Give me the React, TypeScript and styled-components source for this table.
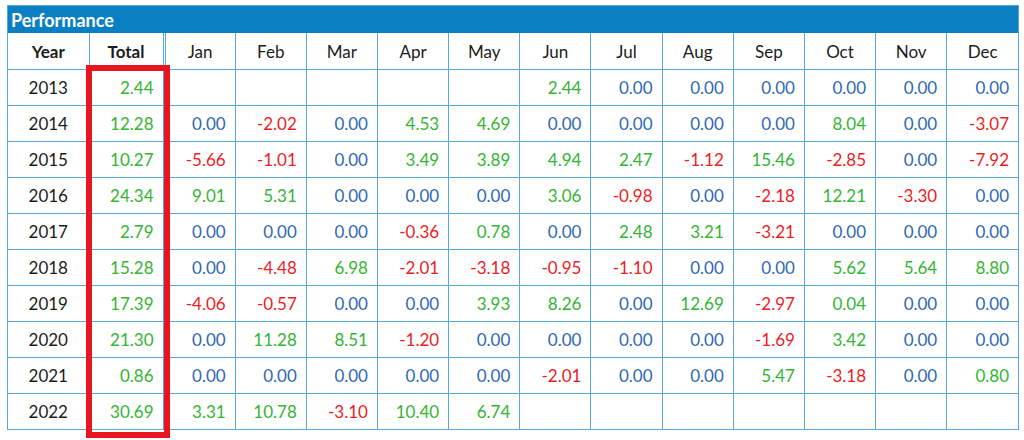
import styled, { createGlobalStyle } from 'styled-components'

const GlobalStyle = createGlobalStyle`
  body {
    margin: 0;
    background: #ffffff;
    font-family: Lato, 'Open Sans', sans-serif;
  }
`

const colors = {
  bar: '#0a80c2',
  border: '#5aa6d6',
  green: '#33b533',
  red: '#ee1c25',
  blue: '#3068b5',
  text: '#1c1c1c',
  box: '#e8141f',
}

const Page = styled.div`
  min-height: 440px;
  box-sizing: border-box;
  padding: 5px 5px 8px 7px;
`

const Panel = styled.div`
  position: relative;
  width: 1012px;
  border: 1px solid ${colors.border};
  box-sizing: border-box;
`

const TitleBar = styled.div`
  height: 27px;
  display: flex;
  align-items: center;
  padding-left: 3px;
  background: ${colors.bar};
  color: #ffffff;
  font-weight: 700;
  font-size: 18px;
`

const Table = styled.table`
  width: 100%;
  border-collapse: collapse;
  table-layout: fixed;
`

const HeadCell = styled.th<{ $bold?: boolean; $split?: boolean }>`
  height: 36px;
  padding: 0;
  border: 1px solid ${colors.border};
  border-top: none;
  ${({ $split }) => ($split ? `border-right: 3px double ${colors.border};` : '')}
  font-size: 17px;
  font-weight: ${({ $bold }) => ($bold ? 700 : 400)};
  color: ${colors.text};
  text-align: center;
  &:first-child {
    border-left: none;
  }
  &:last-child {
    border-right: none;
  }
`

const Cell = styled.td<{ $tone?: 'green' | 'red' | 'blue'; $center?: boolean; $split?: boolean }>`
  height: 35px;
  padding: 0 9px 0 0;
  border: 1px solid ${colors.border};
  ${({ $split }) => ($split ? `border-right: 3px double ${colors.border};` : '')}
  font-size: 17px;
  color: ${({ $tone }) => ($tone ? colors[$tone] : colors.text)};
  text-align: ${({ $center }) => ($center ? 'center' : 'right')};
  ${({ $center }) => ($center ? 'padding: 0;' : '')}
  &:first-child {
    border-left: none;
  }
  &:last-child {
    border-right: none;
  }
  tr:last-child > & {
    border-bottom: none;
  }
`

const Highlight = styled.div`
  position: absolute;
  left: 78px;
  top: 59px;
  width: 84px;
  height: 373px;
  border: 6px solid ${colors.box};
  box-sizing: border-box;
  pointer-events: none;
`

const months = ['Jan', 'Feb', 'Mar', 'Apr', 'May', 'Jun', 'Jul', 'Aug', 'Sep', 'Oct', 'Nov', 'Dec']

const rows: [number, string, (string | null)[]][] = [
  [2013, '2.44', [null, null, null, null, null, '2.44', '0.00', '0.00', '0.00', '0.00', '0.00', '0.00']],
  [2014, '12.28', ['0.00', '-2.02', '0.00', '4.53', '4.69', '0.00', '0.00', '0.00', '0.00', '8.04', '0.00', '-3.07']],
  [2015, '10.27', ['-5.66', '-1.01', '0.00', '3.49', '3.89', '4.94', '2.47', '-1.12', '15.46', '-2.85', '0.00', '-7.92']],
  [2016, '24.34', ['9.01', '5.31', '0.00', '0.00', '0.00', '3.06', '-0.98', '0.00', '-2.18', '12.21', '-3.30', '0.00']],
  [2017, '2.79', ['0.00', '0.00', '0.00', '-0.36', '0.78', '0.00', '2.48', '3.21', '-3.21', '0.00', '0.00', '0.00']],
  [2018, '15.28', ['0.00', '-4.48', '6.98', '-2.01', '-3.18', '-0.95', '-1.10', '0.00', '0.00', '5.62', '5.64', '8.80']],
  [2019, '17.39', ['-4.06', '-0.57', '0.00', '0.00', '3.93', '8.26', '0.00', '12.69', '-2.97', '0.04', '0.00', '0.00']],
  [2020, '21.30', ['0.00', '11.28', '8.51', '-1.20', '0.00', '0.00', '0.00', '0.00', '-1.69', '3.42', '0.00', '0.00']],
  [2021, '0.86', ['0.00', '0.00', '0.00', '0.00', '0.00', '-2.01', '0.00', '0.00', '5.47', '-3.18', '0.00', '0.80']],
  [2022, '30.69', ['3.31', '10.78', '-3.10', '10.40', '6.74', null, null, null, null, null, null, null]],
]

function toneOf(value: string | null) {
  if (value === null) return undefined
  const n = parseFloat(value)
  if (n > 0) return 'green'
  if (n < 0) return 'red'
  return 'blue'
}

export default function App() {
  return (
    <>
      <GlobalStyle />
      <Page>
        <Panel>
          <TitleBar>Performance</TitleBar>
          <Table>
            <colgroup>
              <col style={{ width: 81 }} />
              <col style={{ width: 75 }} />
              {months.map((m) => (
                <col key={`col-${m}`} />
              ))}
            </colgroup>
            <thead>
              <tr>
                <HeadCell $bold>Year</HeadCell>
                <HeadCell $bold $split>
                  Total
                </HeadCell>
                {months.map((m) => (
                  <HeadCell key={m}>{m}</HeadCell>
                ))}
              </tr>
            </thead>
            <tbody>
              {rows.map(([year, total, values]) => (
                <tr key={year}>
                  <Cell $center>{year}</Cell>
                  <Cell $tone='green' $split>
                    {total}
                  </Cell>
                  {values.map((v, index) => (
                    <Cell key={`${year}-${index}`} $tone={toneOf(v)}>
                      {v}
                    </Cell>
                  ))}
                </tr>
              ))}
            </tbody>
          </Table>
          <Highlight />
        </Panel>
      </Page>
    </>
  )
}
